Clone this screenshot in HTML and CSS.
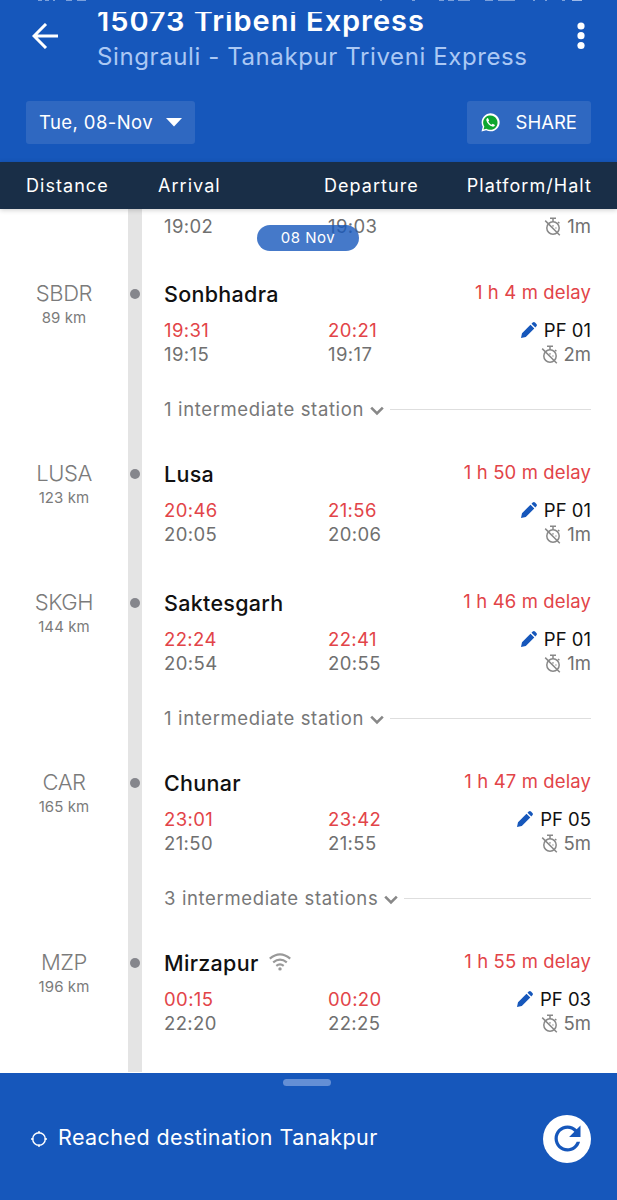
FILE: index.html
```html
<!DOCTYPE html>
<html lang="en">
<head>
<meta charset="utf-8">
<title>15073 Tribeni Express</title>
<link rel="stylesheet" href="styles.css">
</head>
<body>
<svg class="defs" width="0" height="0">
  <symbol id="pencil" viewBox="0 0 16 16"><path d="M0 16 1 11.2 9.5 2.7 13.3 6.500 4.800 15ZM10.500 1.700 11.700.6q1.200-1 2.300 0l1.400 1.400q1 1.200 0 2.300L14.300 5.500Z"/></symbol>
  <symbol id="halt" viewBox="0 0 18 19"><g fill="none" stroke="currentColor" stroke-width="1.500"><circle cx="9" cy="11" r="6.200"/><path d="M6 1.300h6M9 1.400v3.400M1.200 3.600 15.800 18.200M14 5l1.400 1.200M9 8.200v1.400M11.500 10.900h.9"/></g></symbol>
  <symbol id="chevron" viewBox="0 0 14 10"><path d="M1.200 1.600 7 7.400l5.800-5.800" fill="none" stroke="currentColor" stroke-width="2.600"/></symbol>
</svg>
<div class="screen">
  <header class="header">
    <svg class="status" viewBox="0 0 617 2"><path d="M38 0h4M45 0h4M53 0h2M66 0h6M77 0h9M380 0h2M412 0h3M439 0h5M448 0h6M458 0h12M485 0h8M498 0h17M533 0h2M545 0h2M562 0h3M572 .3h10" stroke="#9db9e8" stroke-width="1.400"/></svg>
    <div class="bar">
      <svg class="back" viewBox="0 0 26 26"><path d="M26 13H2M14 1 2 13l12 12" fill="none" stroke="#fff" stroke-width="3"/></svg>
      <div class="titles">
        <h1 class="title">15073 Tribeni Express</h1>
        <p class="subtitle">Singrauli - Tanakpur Triveni Express</p>
      </div>
      <svg class="more" viewBox="0 0 8 28"><g fill="#fff"><circle cx="4" cy="4" r="3.600"/><circle cx="4" cy="13.700" r="3.600"/><circle cx="4" cy="23.500" r="3.600"/></g></svg>
    </div>
    <div class="actions">
      <button class="chip date"><span>Tue, 08-Nov</span><svg width="16" height="9" viewBox="0 0 16 9"><path d="M0 0h16L8 8.500Z" fill="#fff"/></svg></button>
      <button class="chip share"><svg width="19" height="19" viewBox="0 0 19 19"><path d="M.5 18.500 1.800 13.800A9 9 0 1 1 5.200 17.200Z" fill="#fff"/><path d="M2.500 16.500l.8-2.900A7.200 7.200 0 1 1 5.400 15.700Z" fill="#0da62f"/><path d="M6.900 5.100C5.800 5.400 5.100 6.300 5.400 7.600c.7 2.900 3.100 5.300 6 6 1.300.2 2.300-.5 2.500-1.700l-2.200-1.200-1.100 1.100C9.200 11.200 8 10 7.300 8.500l.9-1Z" fill="#fff"/></svg><span>SHARE</span></button>
    </div>
  </header>
  <div class="columns"><span class="c1">Distance</span><span class="c2">Arrival</span><span class="c3">Departure</span><span class="c4">Platform/Halt</span></div>
  <main class="list">
    <div class="day">08 Nov</div>
    <section class="station partial">
      <div class="rail"></div>
      <div class="info"><div class="times plan"><span>19:02</span><span>19:03</span><span class="right"><svg class="halt"><use href="#halt"/></svg>1m</span></div></div>
    </section>
    <section class="station">
      <div class="code"><b>SBDR</b><small>89 km</small></div><div class="rail"><i></i></div>
      <div class="info">
        <div class="head"><h2>Sonbhadra</h2><span class="delay">1 h 4 m delay</span></div>
        <div class="times actual"><span>19:31</span><span>20:21</span><span class="right pf"><svg class="pencil"><use href="#pencil"/></svg>PF 01</span></div>
        <div class="times plan"><span>19:15</span><span>19:17</span><span class="right"><svg class="halt"><use href="#halt"/></svg>2m</span></div>
        <div class="between"><span>1 intermediate station</span><svg class="chevron"><use href="#chevron"/></svg></div>
      </div>
    </section>
    <section class="station">
      <div class="code"><b>LUSA</b><small>123 km</small></div><div class="rail"><i></i></div>
      <div class="info">
        <div class="head"><h2>Lusa</h2><span class="delay">1 h 50 m delay</span></div>
        <div class="times actual"><span>20:46</span><span>21:56</span><span class="right pf"><svg class="pencil"><use href="#pencil"/></svg>PF 01</span></div>
        <div class="times plan"><span>20:05</span><span>20:06</span><span class="right"><svg class="halt"><use href="#halt"/></svg>1m</span></div>
      </div>
    </section>
    <section class="station">
      <div class="code"><b>SKGH</b><small>144 km</small></div><div class="rail"><i></i></div>
      <div class="info">
        <div class="head"><h2>Saktesgarh</h2><span class="delay">1 h 46 m delay</span></div>
        <div class="times actual"><span>22:24</span><span>22:41</span><span class="right pf"><svg class="pencil"><use href="#pencil"/></svg>PF 01</span></div>
        <div class="times plan"><span>20:54</span><span>20:55</span><span class="right"><svg class="halt"><use href="#halt"/></svg>1m</span></div>
        <div class="between"><span>1 intermediate station</span><svg class="chevron"><use href="#chevron"/></svg></div>
      </div>
    </section>
    <section class="station">
      <div class="code"><b>CAR</b><small>165 km</small></div><div class="rail"><i></i></div>
      <div class="info">
        <div class="head"><h2>Chunar</h2><span class="delay">1 h 47 m delay</span></div>
        <div class="times actual"><span>23:01</span><span>23:42</span><span class="right pf"><svg class="pencil"><use href="#pencil"/></svg>PF 05</span></div>
        <div class="times plan"><span>21:50</span><span>21:55</span><span class="right"><svg class="halt"><use href="#halt"/></svg>5m</span></div>
        <div class="between"><span>3 intermediate stations</span><svg class="chevron"><use href="#chevron"/></svg></div>
      </div>
    </section>
    <section class="station">
      <div class="code"><b>MZP</b><small>196 km</small></div><div class="rail"><i></i></div>
      <div class="info">
        <div class="head"><h2>Mirzapur</h2><svg class="wifi" viewBox="0 0 22 18"><g fill="none" stroke="#999" stroke-width="2.200"><path d="M.8 5.600Q11-3 21.200 5.600M4.200 9.300Q11 3.800 17.800 9.300M7.300 12.900Q11 10 14.700 12.900"/></g><circle cx="11" cy="15.900" r="1.700" fill="#999"/></svg><span class="delay">1 h 55 m delay</span></div>
        <div class="times actual"><span>00:15</span><span>00:20</span><span class="right pf"><svg class="pencil"><use href="#pencil"/></svg>PF 03</span></div>
        <div class="times plan"><span>22:20</span><span>22:25</span><span class="right"><svg class="halt"><use href="#halt"/></svg>5m</span></div>
      </div>
    </section>
  </main>
  <footer class="footer">
    <div class="handle"></div>
    <svg class="target" viewBox="0 0 16 16"><g fill="none" stroke="#fff" stroke-width="1.400"><circle cx="8" cy="8" r="6.300"/><path d="M8 0v2.500M8 13.500V16M0 8h2.500M13.500 8H16"/></g></svg>
    <span class="message">Reached destination Tanakpur</span>
    <button class="refresh"><svg width="39" height="39" viewBox="0 0 24 24"><path d="M17.650 6.350C16.200 4.900 14.210 4 12 4c-4.420 0-7.990 3.580-7.990 8s3.570 8 7.990 8c3.730 0 6.840-2.550 7.730-6h-2.080c-.82 2.330-3.040 4-5.650 4-3.310 0-6-2.690-6-6s2.690-6 6-6c1.660 0 3.140.69 4.220 1.780L13 11h7V4l-2.350 2.350z" fill="#1657bb"/></svg></button>
  </footer>
</div>
</body>
</html>
```
FILE: styles.css
```css
* { box-sizing: border-box; }
body { margin: 0; background: #fff; font-family: Inter, "Liberation Sans", sans-serif; }
h1, h2, p { margin: 0; }
button { border: 0; margin: 0; font: inherit; color: inherit; }
svg { display: block; flex: none; }
.defs { position: absolute; }
.screen { width: 617px; height: 1200px; display: flex; flex-direction: column; overflow: hidden; }

.header { height: 162px; flex: none; background: #1657bb; color: #fff; }
.status { width: 617px; height: 2px; margin-bottom: 10px; }
.bar { height: 76px; display: flex; overflow: hidden; padding-left: 32px; }
.back { width: 26px; height: 26px; margin-top: 11px; }
.titles { margin-left: 39px; width: 440px; white-space: nowrap; }
.title { font-size: 29px; line-height: 32px; margin-top: -7px; font-weight: 600; letter-spacing: .95px; }
.subtitle { font-size: 24px; line-height: 32px; margin-top: 4px; color: #abc8f4; letter-spacing: .6px; }
.more { width: 8px; height: 28px; margin: 10px 0 0 40px; }
.actions { display: flex; justify-content: space-between; padding: 13px 26px 0; }
.chip { height: 43px; border-radius: 3px; background: #2f68c1; display: flex; align-items: center; font-size: 18.5px; white-space: nowrap; }
.chip span { margin-top: -1px; }
.date { width: 169px; padding: 0 13px; justify-content: space-between; letter-spacing: .4px; }
.share { width: 124px; padding: 0 14px 0 14px; justify-content: space-between; }

.columns { height: 47px; flex: none; background: #192e47; color: #fff; font-size: 18px; line-height: 47px; padding: 0 25px 0 26px; display: grid; grid-template-columns: 132px 166px 1fr auto; letter-spacing: 1.05px; position: relative; z-index: 1; box-shadow: 0 1px 5px #0003; }

.list { height: 864px; flex: none; overflow: hidden; position: relative; }
.day { position: absolute; z-index: 1; left: 257px; top: 16px; width: 102px; height: 26px; border-radius: 13px; background: #1657bbcc; color: #fff; font-size: 15px; line-height: 26px; text-align: center; letter-spacing: .5px; }
.station { display: grid; grid-template-columns: 128px 14px 1fr; }
.station.partial { height: 65px; }
.partial .rail { grid-column: 2; }
.partial .info { height: 65px; min-height: 0; padding-top: 5px; }
.code { display: flex; flex-direction: column; align-items: center; color: #7b7b7b; }
.code b { font-size: 22px; line-height: 28px; margin-top: 5px; font-weight: 300; letter-spacing: -.4px; }
.code small { font-size: 15px; line-height: 18px; margin-top: 2px; letter-spacing: .1px; }
.rail { background: #e4e4e4; }
.rail i { display: block; width: 10px; height: 10px; border-radius: 50%; background: #85868c; margin: 15px 2px; }
.info { padding: 6px 26px 0 22px; min-height: 129px; }
.head { height: 28px; margin-bottom: 10px; display: flex; align-items: center; }
.head h2 { font-size: 21.5px; font-weight: 500; color: #111; letter-spacing: .3px; }
.delay { margin-left: auto; color: #e24448; font-size: 18.5px; margin-top: -5px; letter-spacing: .12px; }
.wifi { width: 22px; height: 18px; margin: -3px 0 0 10px; }
.times { display: grid; grid-template-columns: 164px 1fr auto; height: 24px; line-height: 24px; font-size: 18.5px; white-space: nowrap; }
.times > span:not(.right) { letter-spacing: .4px; }
.actual { color: #e24448; }
.plan { color: #707070; }
.right { display: flex; align-items: center; }
.pf { color: #111; }
.pencil { width: 16px; height: 16px; fill: #1657bb; margin-right: 7px; }
.halt { width: 18px; height: 19px; color: #888; margin-right: 5px; }
.between { display: flex; align-items: center; height: 24px; margin: 31px 0 33px; color: #777; font-size: 18.5px; letter-spacing: .64px; }
.between span { margin-top: -1px; }
.between::after { content: ""; height: 1px; background: #dedede; flex: 1; margin-left: 6px; }
.chevron { width: 14px; height: 10px; margin: 3px 0 0 6px; color: #888; }

.footer { height: 127px; flex: none; background: #1657bb; color: #fff; position: relative; display: flex; align-items: center; padding: 4px 26px 0 31px; }
.handle { position: absolute; left: 283px; top: 6px; width: 48px; height: 7px; border-radius: 4px; background: #648fd5; }
.target { width: 16px; height: 16px; }
.message { font-size: 21.5px; margin: -3px 0 0 11px; letter-spacing: .42px; }
.refresh { width: 48px; height: 48px; border-radius: 50%; padding: 0; background: #fff; margin-left: auto; display: grid; place-items: center; }
```
